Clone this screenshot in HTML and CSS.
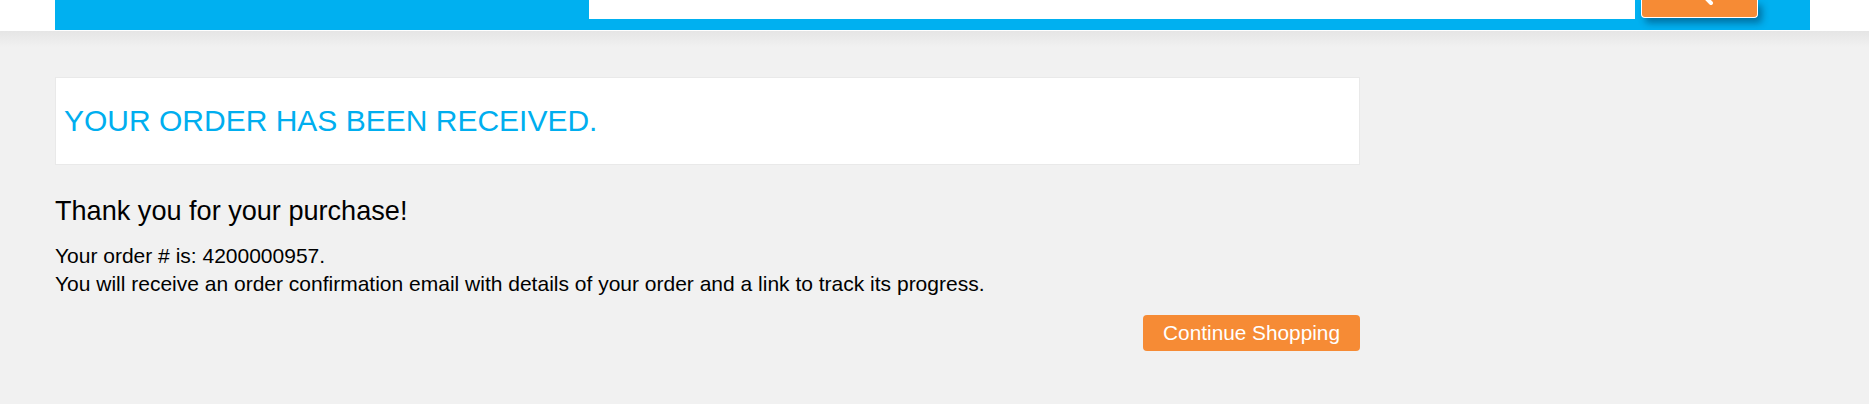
FILE: index.html
```html
<!DOCTYPE html>
<html lang="en">
<head>
<meta charset="utf-8">
<title>Order received</title>
<link rel="stylesheet" href="styles.css">
</head>
<body>
<header class="header">
  <div class="header-bar">
    <div class="search-input"></div>
    <button class="search-btn" type="button" aria-label="Search">
      <svg class="search-icon" width="30" height="30" viewBox="0 0 30 30" aria-hidden="true">
        <circle cx="12" cy="12" r="8" fill="none" stroke="#fff" stroke-width="3"/>
        <line x1="18" y1="18" x2="25" y2="25" stroke="#fff" stroke-width="4" stroke-linecap="round"/>
      </svg>
    </button>
  </div>
</header>
<main class="page">
  <div class="container">
    <div class="title-box">
      <h1 class="title">YOUR ORDER HAS BEEN RECEIVED.</h1>
    </div>
    <h2 class="thanks">Thank you for your purchase!</h2>
    <p class="info">Your order # is: 4200000957.<br>You will receive an order confirmation email with details of your order and a link to track its progress.</p>
    <div class="actions">
      <button class="continue" type="button">Continue Shopping</button>
    </div>
  </div>
</main>
</body>
</html>
```
FILE: styles.css
```css
html, body {
  margin: 0;
  padding: 0;
  background: #ffffff;
  font-family: "Liberation Sans", Arial, sans-serif;
}

.header {
  height: 31px;
  background: #ffffff;
  padding-left: 55px;
  box-sizing: border-box;
}

.header-bar {
  width: 1755px;
  height: 30px;
  background: #00b0f0;
  display: flex;
  align-items: flex-start;
  padding-left: 534px;
  box-sizing: border-box;
}

.search-input {
  width: 1046px;
  height: 19px;
  background: #ffffff;
}

.search-btn {
  position: relative;
  margin-left: 6px;
  width: 117px;
  height: 18px;
  padding: 0;
  background: #f68b35;
  border: 1px solid #ffffff;
  border-top: none;
  border-radius: 0 0 4px 4px;
  box-shadow: 4px 5px 7px rgba(0, 40, 70, 0.45);
  overflow: hidden;
}

.search-icon {
  position: absolute;
  left: 44px;
  top: -22px;
}

.page {
  height: 373px;
  background: linear-gradient(#e5e5e5 0, #f1f1f1 16px, #f1f1f1 100%);
  padding-top: 46px;
  box-sizing: border-box;
}

.container {
  margin-left: 55px;
  width: 1305px;
}

.title-box {
  height: 88px;
  background: #ffffff;
  border: 1px solid #e9e9e9;
  box-sizing: border-box;
  display: flex;
  align-items: center;
  padding-left: 8px;
}

.title {
  margin: 0;
  font-size: 30px;
  font-weight: normal;
  color: #00aeef;
  line-height: normal;
}

.thanks {
  margin: 30px 0 0;
  font-size: 27.1px;
  font-weight: normal;
  color: #000;
  line-height: normal;
}

.info {
  margin: 15px 0 0;
  font-size: 21px;
  line-height: 28px;
  color: #000;
}

.actions {
  display: flex;
  justify-content: flex-end;
  margin-top: 17px;
}

.continue {
  height: 36px;
  padding: 0 20px;
  background: #f68b35;
  color: #ffffff;
  border: none;
  border-radius: 4px;
  font-family: "Liberation Sans", Arial, sans-serif;
  font-size: 20.8px;
  line-height: 36px;
}
```
